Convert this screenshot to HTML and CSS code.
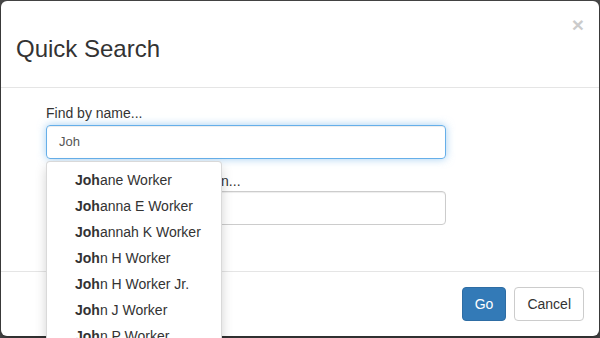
FILE: index.html
```html
<!DOCTYPE html>
<html>
<head>
<meta charset="utf-8">
<link rel="stylesheet" href="styles.css">
</head>
<body>
<div class="backdrop">
  <div class="modal">
    <div class="modal-header">
      <span class="close">&times;</span>
      <h3 class="modal-title">Quick Search</h3>
    </div>
    <div class="modal-body">
      <div class="form">
        <div class="form-group first">
          <label class="label">Find by name...</label>
          <div class="field">
            <div class="input focus">Joh</div>
            <ul class="dropdown">
              <li><b>Joh</b>ane Worker</li>
              <li><b>Joh</b>anna E Worker</li>
              <li><b>Joh</b>annah K Worker</li>
              <li><b>Joh</b>n H Worker</li>
              <li><b>Joh</b>n H Worker Jr.</li>
              <li><b>Joh</b>n J Worker</li>
              <li><b>Joh</b>n P Worker</li>
              <li><b>Joh</b>n Q Worker</li>
            </ul>
          </div>
        </div>
        <div class="form-group">
          <label class="label">Find by member identification...</label>
          <div class="input"></div>
        </div>
      </div>
    </div>
    <div class="modal-footer">
      <button class="btn btn-primary">Go</button>
      <button class="btn btn-default">Cancel</button>
    </div>
  </div>
</div>
</body>
</html>
```
FILE: styles.css
```css
html, body {
  margin: 0;
  padding: 0;
  height: 100%;
  overflow: hidden;
}
body {
  background: #4a4a4a;
  font-family: "Liberation Sans", Arial, sans-serif;
  font-size: 14px;
  color: #333;
}
.backdrop {
  padding: 1px 1px 0 1px;
}
.modal {
  background: #fff;
  border-radius: 6px;
  box-shadow: 0 3px 9px rgba(0,0,0,.5);
}
.modal-header {
  padding: 15px;
  border-bottom: 1px solid #e5e5e5;
}
.close {
  float: right;
  font-size: 21px;
  font-weight: 700;
  line-height: 1;
  color: #000;
  opacity: .2;
  margin-top: -2px;
}
.modal-title {
  margin: 20px 0 10px;
  font-size: 24px;
  font-weight: 400;
  line-height: 1.1;
}
.modal-body {
  padding: 15px 15px 30px;
}
.form {
  margin-left: 30px;
  width: 400px;
}
.form-group {
  margin-bottom: 16px;
}
.form-group.first {
  margin-bottom: 12px;
}
.label {
  display: block;
  line-height: 20px;
  margin-bottom: 2px;
}
.form-group + .form-group .label {
  margin-bottom: 0;
}
.field {
  position: relative;
}
.input {
  box-sizing: border-box;
  height: 34px;
  padding: 6px 12px;
  line-height: 20px;
  font-size: 13px;
  color: #555;
  border: 1px solid #ccc;
  border-radius: 4px;
  box-shadow: inset 0 1px 1px rgba(0,0,0,.075);
}
.input.focus {
  border-color: #66afe9;
  box-shadow: inset 0 1px 1px rgba(0,0,0,.075), 0 0 8px rgba(102,175,233,.6);
}
.dropdown {
  position: absolute;
  top: 36px;
  left: 0;
  z-index: 10;
  width: 176px;
  box-sizing: border-box;
  margin: 0;
  padding: 5px 0;
  list-style: none;
  background: #fff;
  border: 1px solid rgba(0,0,0,.15);
  border-radius: 4px;
  box-shadow: 0 6px 12px rgba(0,0,0,.175);
}
.dropdown li {
  padding: 3px 20px 3px 28px;
  line-height: 20px;
  white-space: nowrap;
  color: #333;
}
.modal-footer {
  padding: 15px;
  border-top: 1px solid #e5e5e5;
  display: flex;
  justify-content: flex-end;
  gap: 8px;
}
.btn {
  font-family: inherit;
  font-size: 14px;
  line-height: 20px;
  padding: 6px 12px;
  border: 1px solid transparent;
  border-radius: 4px;
  margin: 0;
}
.btn-primary {
  color: #fff;
  background: #337ab7;
  border-color: #2e6da4;
}
.btn-default {
  color: #333;
  background: #fff;
  border-color: #ccc;
}
```
